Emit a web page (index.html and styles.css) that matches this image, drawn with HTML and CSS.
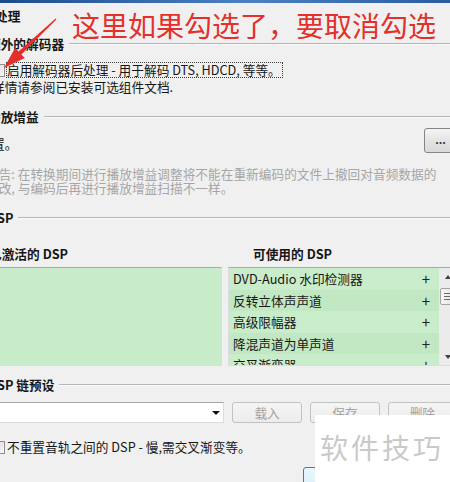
FILE: index.html
```html
<!DOCTYPE html>
<html lang="zh-CN">
<head>
    <meta charset="UTF-8">
    <meta name="viewport" content="width=device-width, initial-scale=1.0">
    <title>转换器设置 - 处理</title>
    <link rel="stylesheet" href="styles.css">
</head>
<body>

<div class="titlebar"></div>

<div class="page">
    <div class="page-title">处理</div>

    <!-- 额外的解码器 -->
    <div class="group-head head-decoders"><span>额外的解码器</span></div>
    <div class="group-body">
        <label class="check check-top">
            <span class="box"></span>
            <span class="check-text focused">启用解码器后处理 - 用于解码 DTS, HDCD, 等等。</span>
        </label>
        <p class="note">详情请参阅已安装可选组件文档.</p>
    </div>

    <!-- 播放增益 -->
    <div class="group-head head-gain"><span>播放增益</span></div>
    <div class="group-body">
        <div class="gain-row">
            <span class="gain-text">置。</span>
            <button class="btn-more">...</button>
        </div>
    </div>
    <p class="warning">警告: 在转换期间进行播放增益调整将不能在重新编码的文件上撤回对音频数据的<br>更改, 与编码后再进行播放增益扫描不一样。</p>

    <!-- DSP -->
    <div class="group-head head-dsp"><span>DSP</span></div>
    <div class="group-body">
        <div class="dsp-labels">
            <span class="label-active">已激活的 DSP</span>
            <span class="label-avail">可使用的 DSP</span>
        </div>
        <div class="dsp-lists">
            <div class="list"></div>
            <div class="list list-avail">
                <div class="rows">
                    <div class="row"><span>DVD-Audio 水印检测器</span><span class="plus">+</span></div>
                    <div class="row"><span>反转立体声声道</span><span class="plus">+</span></div>
                    <div class="row"><span>高级限幅器</span><span class="plus">+</span></div>
                    <div class="row"><span>降混声道为单声道</span><span class="plus">+</span></div>
                    <div class="row"><span>交叉渐变器</span><span class="plus">+</span></div>
                </div>
                <div class="scrollbar">
                    <div class="sb-btn"><span class="tri-up"></span></div>
                    <div class="sb-track"><div class="thumb"><i></i><i></i><i></i></div></div>
                    <div class="sb-btn"><span class="tri-down"></span></div>
                </div>
            </div>
        </div>
    </div>

    <!-- DSP 链预设 -->
    <div class="group-head head-presets"><span>DSP 链预设</span></div>
    <div class="group-body">
        <div class="preset-row">
            <div class="combo"><span class="tri-down"></span></div>
            <button class="btn btn-load" disabled>载入</button>
            <button class="btn" disabled>保存</button>
            <button class="btn" disabled>删除</button>
        </div>
        <label class="check check-bottom">
            <span class="box"></span>
            <span class="check-text">不重置音轨之间的 DSP - 慢,需交叉渐变等。</span>
        </label>
    </div>

    <div class="footer">
        <button class="btn-default">确定</button>
    </div>
</div>

<!-- 标注 -->
<div class="annotation">这里如果勾选了，要取消勾选</div>
<svg class="arrow" width="70" height="80" viewBox="0 0 70 80">
    <polygon points="56.4,19.4 21.4,54.4 24.8,58 4,68 15.2,47.8 18.6,51.4 55.6,18.6" fill="#e3302c"/>
</svg>

<div class="watermark">软件技巧</div>

</body>
</html>
```

FILE: styles.css
```css
html, body {
    margin: 0;
    height: 100%;
    overflow: hidden;
}
body {
    position: relative;
    background-color: #f0f0f0;
    font-family: "Noto Sans CJK SC", "Noto Sans", sans-serif;
    font-size: 12.7px;
    color: #161616;
}
.titlebar {
    height: 3px;
    background: linear-gradient(90deg, #1d4c8c, #4b80c2 55%, #2a5d9e);
}
.page {
    width: 469px;
    margin-left: -12px;
}
.page-title {
    height: 26px;
    line-height: 26px;
    padding-left: 7px;
    font-weight: 700;
}
.group-head {
    display: flex;
    align-items: center;
    gap: 5px;
    height: 16px;
    line-height: 16px;
    font-weight: 700;
    white-space: nowrap;
}
.group-head::after {
    content: "";
    flex: 1;
    border-top: 1px solid #b6b6b6;
    border-bottom: 1px solid #fbfbfb;
}
.head-decoders { margin-top: 7px; }
.head-gain { margin-top: 14px; }
.head-dsp { margin-top: 15px; }
.head-presets { margin-top: 11px; }
.group-body {
    padding-left: 4px;
}

/* checkboxes */
.check {
    display: flex;
    align-items: center;
    gap: 1px;
    height: 16px;
    white-space: nowrap;
}
.check-top { margin-top: 10px; }
.check-bottom { margin-top: 16px; }
.box {
    width: 11px;
    height: 11px;
    border: 1px solid #8e8f8f;
    background: linear-gradient(135deg, #d8d8d8, #f8f8f8);
    flex-shrink: 0;
}
.check-text {
    line-height: 14px;
    padding: 0 1px 0 0;
    border: 1px solid transparent;
}
.focused {
    border: 1px dotted #3a3a3a;
}
.note {
    margin: 1px 0 0;
    line-height: 16px;
    white-space: nowrap;
}

/* replay gain */
.gain-row {
    display: flex;
    justify-content: space-between;
    align-items: center;
    height: 25px;
    margin-top: 3px;
}
.gain-text {
    padding-top: 5px;
}
.btn-more {
    width: 33px;
    height: 25px;
    border: 1px solid #858585;
    border-radius: 3px;
    background: linear-gradient(#f4f4f4, #e4e4e4 50%, #d9d9d9);
    font-family: inherit;
    font-size: 11px;
    font-weight: 700;
    color: #333;
    padding: 0 0 4px;
}
.warning {
    margin: 14px 0 0 -2px;
    line-height: 14px;
    color: #a6a6a6;
    white-space: nowrap;
}

/* DSP */
.dsp-labels {
    display: grid;
    grid-template-columns: 230px 229px;
    column-gap: 6px;
    margin-top: 20px;
    line-height: 16px;
    font-weight: 700;
}
.label-active { margin-left: -3px; }
.label-avail { padding-left: 25px; }
.dsp-lists {
    display: grid;
    grid-template-columns: 230px 229px;
    column-gap: 6px;
    margin-top: 5px;
}
.list {
    height: 97px;
    background-color: #c8ecc9;
    border: 1px solid #dcdcdc;
    border-top-color: #a9a9a9;
}
.list-avail {
    display: flex;
    background-color: #f0f0f0;
}
.rows {
    flex: 1;
    overflow: hidden;
    background-color: #c8ecc9;
}
.row {
    display: flex;
    justify-content: space-between;
    align-items: center;
    height: 21.5px;
    padding: 0 9px 0 4px;
    white-space: nowrap;
    background-color: #c9ecca;
}
.row:nth-child(even) {
    background-color: #c1e7c3;
}
.plus {
    font-size: 15px;
    color: #222;
}
.scrollbar {
    width: 17px;
    display: flex;
    flex-direction: column;
    background-color: #ebebeb;
}
.sb-btn {
    height: 17px;
    display: flex;
    align-items: center;
    justify-content: center;
}
.sb-track {
    flex: 1;
    padding: 3px 1px 0;
}
.thumb {
    height: 17px;
    border: 1px solid #a3a3a3;
    border-radius: 2px;
    background: linear-gradient(90deg, #f6f6f6, #e4e4e4);
    display: flex;
    flex-direction: column;
    justify-content: center;
    align-items: center;
    gap: 2px;
    box-sizing: border-box;
}
.thumb i {
    width: 7px;
    height: 1px;
    background-color: #6a6a6a;
}
.tri-up {
    border-left: 3.5px solid transparent;
    border-right: 3.5px solid transparent;
    border-bottom: 4px solid #404040;
}
.tri-down {
    border-left: 3.5px solid transparent;
    border-right: 3.5px solid transparent;
    border-top: 4px solid #404040;
}

/* presets */
.preset-row {
    display: flex;
    gap: 8px;
    margin-top: 9px;
    height: 21px;
}
.combo {
    width: 229px;
    height: 19px;
    background-color: #fff;
    border: 1px solid #dcdcdc;
    border-top-color: #a5a5a5;
    display: flex;
    align-items: center;
    justify-content: flex-end;
    padding-right: 3px;
    box-sizing: content-box;
}
.combo .tri-down {
    border-top-color: #111;
    border-left-width: 4px;
    border-right-width: 4px;
}
.btn {
    width: 70px;
    height: 21px;
    border: 1px solid #c2c2c2;
    border-radius: 3px;
    background: linear-gradient(#f5f5f5, #ececec);
    font-family: inherit;
    font-size: 12.7px;
    color: #a3a3a3;
    padding: 0;
}
.btn-load { width: 71px; }

.footer {
    margin-top: 12px;
    padding-left: 315px;
}
.btn-default {
    width: 75px;
    height: 23px;
    border: 1px solid #3c7fb1;
    border-radius: 3px;
    background: linear-gradient(#eaf6fd, #d9f0fc);
    font-family: inherit;
    font-size: 12.7px;
}

/* overlays */
.annotation {
    position: absolute;
    left: 72px;
    top: 9px;
    font-size: 28px;
    line-height: 32px;
    color: #e3302c;
    white-space: nowrap;
}
.arrow {
    position: absolute;
    left: 0;
    top: 0;
}
.watermark {
    position: absolute;
    left: 315px;
    top: 415px;
    right: 0;
    bottom: 0;
    background-color: #fff;
    padding: 17px 0 0 5px;
    font-size: 28px;
    line-height: 30px;
    letter-spacing: 3px;
    color: #c9c9c9;
    white-space: nowrap;
}
```
